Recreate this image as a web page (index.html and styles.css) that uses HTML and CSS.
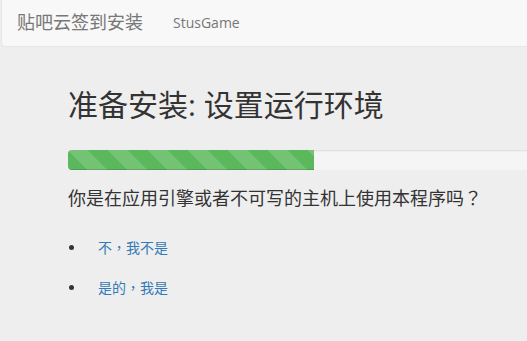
FILE: index.html
```html
<!DOCTYPE html>
<html lang="zh-CN">
<head>
  <meta charset="UTF-8">
  <title>贴吧云签到安装</title>
  <link rel="stylesheet" href="styles.css">
</head>
<body>
  <!-- Top navigation -->
  <nav class="navbar">
    <a class="navbar-brand" href="#">贴吧云签到安装</a>
    <a class="nav-link" href="#">StusGame</a>
  </nav>

  <!-- Install step -->
  <div class="container">
    <h2 class="step-title">准备安装: 设置运行环境</h2>

    <div class="progress">
      <div class="progress-bar" style="width: 50%"></div>
    </div>

    <!-- zh-TW gives the centred full-width punctuation of the original -->
    <p class="question" lang="zh-TW">你是在应用引擎或者不可写的主机上使用本程序吗？</p>

    <ul class="choices" lang="zh-TW">
      <li><a href="#">不，我不是</a></li>
      <li><a href="#">是的，我是</a></li>
    </ul>
  </div>
</body>
</html>
```

FILE: styles.css
```css
/* Colours, roughly Bootstrap 3 */
:root {
  --page-bg: #eeeeee;
  --nav-bg: #f8f8f8;
  --nav-border: #e7e7e7;
  --nav-text: #777777;
  --text-color: #333333;
  --link-color: #337ab7;
  --bar-green: #5cb85c;
  --track-bg: #f5f5f5;
}

body {
  margin: 0;
  background: var(--page-bg);
  color: var(--text-color);
  font-family: "Open Sans", "Noto Sans CJK SC", sans-serif;
  font-size: 14px;
  line-height: 1.42857;
  overflow: hidden;
}

a {
  text-decoration: none;
}

/* Navbar */
.navbar {
  display: flex;
  align-items: center;
  height: 46px;
  margin-left: 1px;
  margin-right: -10px;
  background: var(--nav-bg);
  border: 1px solid var(--nav-border);
  border-top: none;
  border-radius: 0 0 4px 4px;
}

.navbar-brand {
  padding: 0 15px;
  font-size: 18px;
  color: var(--nav-text);
}

.nav-link {
  padding: 0 15px;
  font-size: 14px;
  color: var(--nav-text);
}

/* Content */
.container {
  padding-left: 68px;
}

.step-title {
  margin: 41px 0 0;
  font-size: 30px;
  font-weight: 400;
  line-height: 1.1;
}

.progress {
  height: 20px;
  margin: 29px -33px 0 0;
  background: var(--track-bg);
  border-radius: 4px;
  box-shadow: inset 0 1px 2px rgba(0, 0, 0, 0.1);
  overflow: hidden;
}

.progress-bar {
  height: 100%;
  background-color: var(--bar-green);
  background-image: linear-gradient(45deg,
    rgba(255, 255, 255, 0.15) 25%, transparent 25%,
    transparent 50%, rgba(255, 255, 255, 0.15) 50%,
    rgba(255, 255, 255, 0.15) 75%, transparent 75%, transparent);
  background-size: 40px 40px;
  box-shadow: inset 0 -1px 0 rgba(0, 0, 0, 0.15);
}

.question,
.choices {
  font-family: "Open Sans", "Noto Sans CJK TC", sans-serif;
}

.question {
  margin: 16px 0 0;
  font-size: 18px;
}

.choices {
  margin: 16px 0 0;
  padding-left: 18px;
}

.choices li {
  padding: 10px 0;
  line-height: 20px;
}

.choices a {
  margin-left: 12px;
  font-size: 14px;
  color: var(--link-color);
}
```
